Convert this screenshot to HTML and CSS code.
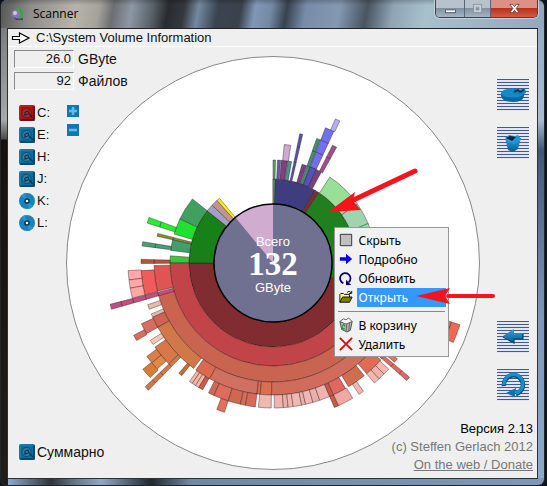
FILE: index.html
```html
<!DOCTYPE html>
<html lang="ru">
<head>
<meta charset="utf-8">
<title>Scanner</title>
<link rel="stylesheet" href="styles.css">
</head>
<body>
<svg class="defs" width="0" height="0" aria-hidden="true">
  <defs>
    <linearGradient id="blue" x1="0" y1="0" x2="0" y2="1"><stop offset="0" stop-color="#2fa0dc"/><stop offset="1" stop-color="#065a94"/></linearGradient>
    <symbol id="disk" viewBox="0 0 16 16">
      <rect width="16" height="16" rx="2" fill="currentColor"/>
      <path d="M1 15V2l1-1h13" fill="none" stroke="#fff" stroke-opacity=".15"/>
      <path d="M1 15h14V1" fill="none" stroke="#002038" stroke-opacity=".45" stroke-width="2"/>
      <circle cx="7.500" cy="8" r="4.500" fill="#fff" fill-opacity=".12" stroke="#001c30" stroke-opacity=".45"/>
      <path d="M6 7l3-1 1 3 4 4M6 7v3l3-1" fill="none" stroke="#001c30" stroke-opacity=".7" stroke-width="1.300"/>
    </symbol>
    <symbol id="disc" viewBox="0 0 16 16">
      <circle cx="8" cy="8" r="8" fill="#1583bd"/>
      <path d="M8 8L2 3a8 8 0 0 1 4-3zM8 8l6 5a8 8 0 0 1-4 3z" fill="#2c94ca"/>
      <circle cx="8" cy="8" r="2.800" fill="#06344f"/><circle cx="8" cy="8" r="1.300" fill="#fff"/>
    </symbol>
  </defs>
</svg>

<div class="window">
  <header class="titlebar">
    <svg class="app-icon" viewBox="0 0 14 14" aria-hidden="true">
      <path d="M5 1q7-1 7 6 0 3-4 4l-2-4z" fill="#30a848"/><circle cx="5" cy="7" r="4.500" fill="#8878a8"/><path d="M2 10q5 3 10 1v2H5z" fill="#473a80"/><circle cx="4" cy="6" r="2" fill="#d0c8dc"/>
    </svg>
    <h1 class="title">Scanner</h1>
    <div class="controls">
      <button class="ctl" aria-label="Minimize"><svg viewBox="0 0 12 12"><rect x=".5" y="7.500" width="11" height="3" fill="#fff" stroke="#555a66"/></svg></button>
      <button class="ctl ctl-max" aria-label="Maximize"><svg viewBox="0 0 12 12"><path d="M1.500 1.500h9v9h-9zM4.500 4.500h3v3h-3z" fill="#c8ced6" fill-rule="evenodd" stroke="#8a929e"/></svg></button>
      <button class="ctl ctl-close" aria-label="Close"><svg viewBox="0 0 12 12"><path d="M1 1.500h3l2 2.500 2-2.500h3L7.800 6l3.200 4.500H8L6 8l-2 2.500H1L4.200 6z" fill="#fff" stroke="#5c2a2a" stroke-width=".8"/></svg></button>
    </div>
  </header>

  <main class="client">
    <div class="path">
      <svg class="path-arrow" viewBox="0 0 18 12" aria-hidden="true"><path d="M.5 4.500h7v-3.500l9.500 5-9.500 5V7.500h-7z" fill="#fff" stroke="#000" stroke-width="1.200"/></svg>
      <span>C:\System Volume Information</span>
    </div>

    <div class="stage">
      <div class="chart">
        <svg id="sunburst" viewBox="0 0 414 414" role="img" aria-label="Всего 132 GByte"></svg>
        <svg class="pointer" viewBox="0 0 414 414" aria-hidden="true">
          <path d="M349 115L281 147" stroke="#f5141c" stroke-width="5" stroke-linecap="round"/>
          <path d="M262 156l27-20-2 9 8 9z" fill="#f5141c"/>
        </svg>
        <menu class="menu">
          <li><button class="item"><svg viewBox="0 0 16 16"><path d="M1.500 1.500h13v13h-13z" fill="#c0c0c0" stroke="#222"/></svg><span>Скрыть</span></button></li>
          <li><button class="item"><svg viewBox="0 0 16 16"><path d="M1 6h7V2l7 6-7 6v-4H1z" fill="#0000f0"/></svg><span>Подробно</span></button></li>
          <li><button class="item"><svg viewBox="0 0 16 16"><path d="M5 14a6 6 0 1 1 6-1" fill="none" stroke="#000080" stroke-width="2"/><path d="M8 10v6h6z" fill="#000080"/></svg><span>Обновить</span></button></li>
          <li><button class="item selected"><svg viewBox="0 0 16 16"><path d="M1 14V5l1-1h3l1 1h6v3" fill="#ffff80" stroke="#000"/><path d="M1 14l3-6h11l-3 6z" fill="#808000" stroke="#000"/><path d="M9 3q2-3 5 0M14.500 1v3h-3" fill="none" stroke="#000"/></svg><span>Открыть</span></button></li>
          <li class="rule" role="separator"></li>
          <li><button class="item"><svg viewBox="0 0 16 16"><path d="M1 4l7 2 7-2-2 10-4 2-6-3z" fill="#b8b8b8" stroke="#444"/><path d="M1 4l4-3 3 1 3-2 4 4-7 3z" fill="#f4f4f4" stroke="#555"/><path d="M9 7l-1 8M12 6l-1 9" stroke="#555"/><path d="M3.500 9l2-1.500 1.500 2M3.500 10l1 2.500 2-.5" fill="none" stroke="#10a040" stroke-width="1.500"/></svg><span>В корзину</span></button></li>
          <li><button class="item"><svg viewBox="0 0 16 16"><path d="M1 1l14 14M15 1L1 15" stroke="#e00000" stroke-width="2"/></svg><span>Удалить</span></button></li>
        </menu>
        <svg class="pointer" viewBox="0 0 414 414" aria-hidden="true">
          <path d="M382 240h45" stroke="#f5141c" stroke-width="4" stroke-linecap="round"/>
          <path d="M350 240l34-8-5 8 5 8z" fill="#f5141c"/>
        </svg>
      </div>

      <div class="panels">
        <div class="left">
          <dl class="stats">
            <div><dd>26.0</dd><dt>GByte</dt></div>
            <div><dd>92</dd><dt>Файлов</dt></div>
          </dl>
          <div class="picker">
            <div class="drives">
              <button class="drive"><svg class="red"><use href="#disk"/></svg>C:</button>
              <button class="drive"><svg><use href="#disk"/></svg>E:</button>
              <button class="drive"><svg><use href="#disk"/></svg>H:</button>
              <button class="drive"><svg><use href="#disk"/></svg>J:</button>
              <button class="drive"><svg><use href="#disc"/></svg>K:</button>
              <button class="drive"><svg><use href="#disc"/></svg>L:</button>
            </div>
            <div class="depth">
              <button aria-label="More rings"><svg viewBox="0 0 12 12"><path d="M6 2v8M2 6h8" stroke="#64bcec" stroke-width="2.500"/></svg></button>
              <button aria-label="Fewer rings"><svg viewBox="0 0 12 12"><path d="M2 6h8" stroke="#64bcec" stroke-width="2.500"/></svg></button>
            </div>
          </div>
          <button class="drive total"><svg><use href="#disk"/></svg>Суммарно</button>
        </div>

        <div class="right">
          <div class="tools">
            <button class="tool" aria-label="Disk"><svg viewBox="0 0 32 32"><path d="M4 14v3q1 6 12 6 10 0 11-6v-5z" fill="#0868a4"/><ellipse cx="15.500" cy="14" rx="11.500" ry="4.500" fill="#158acb"/><path d="M16 14l2-4 4 1 6-2 1 5-5 2z" fill="#1280bd"/><path d="M17 13l4-2 2 2 4-2" fill="none" stroke="#06334f" stroke-width="1.500"/></svg></button>
            <button class="tool" aria-label="Recycle bin"><svg viewBox="0 0 32 32"><path d="M8 11l6 4 10-4-3 11-5 3-5-2z" fill="url(#blue)"/><path d="M8 11l4-3 6 1 3-1 3 4-7 5z" fill="#2297d6"/><path d="M9 11l4-2 6 1-4 4z" fill="#06283e"/></svg></button>
          </div>
          <div class="tools">
            <button class="tool" aria-label="Back"><svg viewBox="0 0 32 32"><path d="M6 15l11-7v4h9v6H17v4z" fill="url(#blue)"/><path d="M6 16l11 6v-4h9v-5" fill="none" stroke="#064066" stroke-width="1.200"/></svg></button>
            <button class="tool" aria-label="Rescan"><svg viewBox="0 0 32 32"><path d="M7 17a9.500 9.500 0 1 1 12 8" fill="none" stroke="#064870" stroke-width="4.500"/><path d="M7 16a9.500 9.500 0 1 1 12 8" fill="none" stroke="#198ccb" stroke-width="3.500"/><path d="M9 24l10-5-1 9z" fill="#0c73ae"/></svg></button>
          </div>
          <footer class="about">
            <span class="version">Версия 2.13</span>
            <span>(c) Steffen Gerlach 2012</span>
            <a href="#donate">On the web / Donate</a>
          </footer>
        </div>
      </div>
    </div>
  </main>
</div>
<script src="sunburst.js"></script>
</body>
</html>
```
FILE: styles.css
```css
* { box-sizing: border-box; }

body {
  margin: 0;
  height: 100vh;
  font: 13px/18px "Liberation Sans", Arial, sans-serif;
  color: #111;
  background: #0c1420;
}

button {
  margin: 0;
  padding: 0;
  border: 0;
  background: none;
  font: inherit;
  color: inherit;
}

svg { display: block; overflow: visible; }
.defs { position: absolute; }

.window {
  display: flex;
  flex-direction: column;
  min-height: 100vh;
  margin-right: 2px;
  padding: 0 6px 6px;
  border: 1px solid #20252c;
  border-top: 0;
  border-radius: 7px;
  background:
    linear-gradient(90deg, transparent 0 7px, #30343a 50px, #68798c 75px, #90a8c8 100px, #202830 150px, #7088a8 190px, #8098b8 100%) bottom / 100% 7px no-repeat,
    linear-gradient(#707070 0, #a8a8a8 120px, #4a4a4a 139px, #16130f 140px, #201c18 100%) left / 7px 100% no-repeat,
    linear-gradient(#8fa8c4 0, #a8bcd4 120px, #405878 150px, #7c98bc 320px, #8cabd0 100%);
}

.titlebar {
  display: flex;
  align-items: center;
  gap: 8px;
  height: 28px;
  margin: 0 -6px;
  padding: 0 6px 0 10px;
  border-radius: 7px 7px 0 0;
  background:
    linear-gradient(#0003, transparent 5px),
    linear-gradient(100deg, #555 0, #8c8c8a 30px, #b8b4ac 75px, #a4a29c 98px, #6c6e72 112px, #8c98a4 130px, #5c646c 150px, #282c30 166px, #34393e 182px, #7488a0 196px, #3a4450 215px, #3a424c 238px, #8098b4 252px, #7488a4 268px, #38424e 283px, #788ca8 302px, #8498b0 335px, #485460 362px, #90a4b4 388px, #a8c0cc 420px, #94a8bc 100%);
}

.app-icon { width: 14px; height: 14px; }

.title {
  margin: 0;
  font: 12px/16px "Open Sans", "Noto Sans", sans-serif;
  color: #000;
}

.controls {
  display: flex;
  align-self: flex-start;
  margin-left: auto;
  height: 18px;
  border: 1px solid #3c4450;
  border-top: 0;
  border-radius: 0 0 5px 5px;
  overflow: hidden;
  box-shadow: 0 0 0 1px #c4d0dc;
}

.ctl {
  display: grid;
  place-items: center;
  width: 28px;
  background: linear-gradient(#b8c2cc 45%, #8390a0 50%, #a4b4c4);
}
.ctl svg { width: 11px; height: 11px; }
.ctl-max { width: 27px; border: solid #5c6672; border-width: 0 1px; }
.ctl-close { width: 46px; background: linear-gradient(#dc9184 45%, #b83220 50%, #d45c40); }

.client {
  flex: 1;
  display: flex;
  flex-direction: column;
  border: 1px solid #303030;
  border-top-color: #222;
  background: #efefef;
}

.path {
  display: flex;
  align-items: center;
  gap: 6px;
  height: 18px;
  padding-left: 4px;
  border-bottom: 1px solid #fff;
}
.path-arrow { width: 18px; height: 12px; }

.stage {
  flex: 1;
  display: grid;
}
.stage > * { grid-area: 1 / 1; }

.chart {
  position: relative;
  align-self: center;
  justify-self: center;
  width: 414px;
}

.pointer { position: absolute; inset: 0; pointer-events: none; }

.disc-label { fill: #fff; text-anchor: middle; }
.disc-total { font: bold 33px "Liberation Serif", "Times New Roman", serif; }

.menu {
  position: absolute;
  left: 268px;
  top: 171px;
  width: 115px;
  margin: 0;
  padding: 3px 2px 2px;
  list-style: none;
  border: 1px solid #979797;
  background: #f1f1f1;
  font: 12px/19px "Noto Sans", "Open Sans", sans-serif;
  color: #000;
}

.item {
  display: flex;
  align-items: center;
  gap: 2px;
  width: 100%;
  height: 19px;
  text-align: left;
}
.item svg { width: 14px; height: 14px; margin: 0 2px; }
.item span { flex: 1; padding-left: 2px; }
.selected span { background: #3399ff; color: #fff; }
.rule { height: 1px; margin: 4px 1px; background: #888; }

.panels {
  z-index: 1;
  display: flex;
  justify-content: space-between;
  pointer-events: none;
}
.panels button, .panels a { pointer-events: auto; }

.left {
  display: flex;
  flex-direction: column;
  padding: 3px 0 17px 6px;
}

.stats { margin: 0; display: grid; gap: 4px; }
.stats div { display: flex; align-items: center; gap: 4px; }
.stats dt { font-size: 14px; }
.stats dd {
  width: 60px;
  height: 18px;
  line-height: 16px;
  margin: 0;
  padding-right: 2px;
  border: 1px solid #888;
  border-right-color: #fff;
  border-bottom-color: #fff;
  text-align: right;
}

.picker { display: flex; gap: 17px; padding: 14px 0 0 5px; }
.drives { display: grid; gap: 4px; align-content: start; width: 31px; }
.drive { display: flex; align-items: center; gap: 2px; height: 18px; white-space: nowrap; }
.drive svg { width: 16px; height: 16px; flex: none; color: #0b6d9f; }
.drive svg.red { color: #b00c0c; }
.total { margin: auto 0 0 5px; font-size: 14px; }

.depth { display: grid; gap: 7px; align-content: start; padding-top: 1px; }
.depth button { width: 12px; height: 12px; background: #0f78b4; }

.right {
  display: flex;
  flex-direction: column;
  align-items: flex-end;
  padding: 32px 4px 4px 0;
}
.tools { display: grid; gap: 16px; padding-right: 4px; }
.tools + .tools { margin-top: auto; }
.tool {
  width: 32px;
  height: 32px;
  background: repeating-linear-gradient(#435a91 0 1px, #e4e6ee 1px 3px);
}

.about {
  display: flex;
  flex-direction: column;
  margin-top: 19px;
  text-align: right;
  color: #777;
}
.version { color: #000; }
.about a { color: #777; }
```
FILE: sunburst.js
```js
// Ring boundaries: ring n lies between RADII[n - 1] and RADII[n].
const RADII = [59, 84, 103, 119, 132, 145, 157, 168, 178, 188, 197];
const CENTER = 207;

// [first ring, last ring, start angle, end angle, colour], clockwise from the top.
const SECTORS = [
  [1, 1, 0, 30, "#403c80"], [1, 1, 30, 33, "#802c38"], [1, 1, 33, 104, "#208020"],
  [1, 1, 104, 270, "#802c30"], [1, 1, 270, 308.4, "#188018"],
  [1, 1, 308.4, 313.5, "#a0a0c4"], [1, 1, 313.5, 318.2, "#c09494"], [1, 1, 318.2, 320.4, "#f4ec20"],
  [1, 2, 0, 1.4, "#50a860"], [2, 2, 2.5, 4.2, "#6060b0"], [2, 2, 4.6, 8, "#804080"],
  [3, 3, 5.4, 8.6, "#d0a8d0"], [2, 2, 8.2, 10.4, "#4a9090"], [2, 4, 11.7, 13, "#5454b8"],
  [2, 2, 16.4, 19, "#784080"], [2, 4, 19.3, 21, "#409078"], [2, 5, 21.2, 24.8, "#7070f0"],
  [2, 2, 21.2, 24.8, "#5454b8"], [6, 6, 23.4, 25.2, "#b0b0f8"], [2, 2, 25, 28, "#784080"], [3, 4, 26.8, 28.8, "#a05090"],
  [2, 2, 33.5, 55, "#98e098"], [2, 2, 55, 67.5, "#a0d4b0"], [2, 2, 67.5, 75, "#98e0a8"],
  [2, 2, 295.3, 308.5, "#40a060"], [2, 2, 286.3, 295.3, "#20e030"], [3, 4, 287.6, 290.2, "#20f030"],
  [2, 3, 283, 284.4, "#809030"], [2, 2, 277, 283, "#40a068"], [3, 4, 277.4, 279.3, "#40a078"],
  [2, 2, 270, 274, "#38c840"], [3, 4, 269.8, 271.6, "#b05838"],
  [2, 2, 104, 270, "#c04448"],
  [3, 3, 104, 254.5, "#c86450"], [3, 3, 256.3, 268.8, "#e05454"],
  [4, 4, 256, 266.7, "#f05c5c"], [5, 5, 263.3, 267, "#ffa8a8"], [5, 5, 260, 263.3, "#ffa8a8"], [5, 5, 256, 260, "#ffa8a8"],
  [3, 7, 254, 255.8, "#c05080"],
  [4, 4, 249.5, 251.6, "#e8b8a8"], [4, 4, 245.7, 247.3, "#e8b8b0"], [4, 4, 240.8, 245.7, "#d06454"],
  [5, 5, 240.8, 245.2, "#d86c60"], [6, 6, 240.4, 242.6, "#d86c60"],
  [4, 4, 217, 240.8, "#d07848"], [5, 5, 235.8, 237.8, "#f0c8b8"],
  [5, 5, 226, 234.5, "#d87848"], [6, 6, 230.5, 233.5, "#d88048"], [6, 6, 227.5, 230.5, "#e08848"],
  [7, 7, 227, 230.8, "#d87c38"], [5, 8, 224.4, 225.9, "#d07848"], [5, 5, 219, 220.5, "#c07038"],
  [4, 4, 208.7, 215.8, "#dc6850"], [4, 4, 187, 208.7, "#d07060"], [4, 4, 185.6, 187, "#d86c50"],
  [4, 4, 180.6, 185.6, "#d87050"], [4, 4, 104, 180.6, "#d06c5c"],
  [5, 5, 213.8, 215.2, "#f0b8a8"], [5, 5, 212.3, 213.8, "#f0b8a8"], [5, 5, 210.8, 212.3, "#f0b8a8"],
  [5, 5, 209, 210.8, "#d05848"], [5, 5, 204, 206.4, "#d06858"], [5, 5, 198, 204, "#dc6c5c"],
  [6, 6, 198, 201, "#e07060"], [5, 5, 193, 198, "#d06850"], [5, 5, 191, 193, "#d07058"], [5, 5, 187, 191, "#d86858"],
  [5, 5, 180.7, 185.8, "#f0b8b0"],
  [5, 5, 175.9, 179.5, "#f0b4b0"], [5, 5, 174, 175.9, "#e8b0a8"], [5, 5, 172, 174, "#f0b4b0"],
  [5, 5, 168.6, 172, "#f0b8b0"], [5, 5, 167, 168.6, "#e8b0a8"], [5, 5, 164, 167, "#f0b8b0"],
  [5, 5, 161.2, 164, "#e8b0a8"], [5, 5, 157, 161.2, "#f0b4b0"],
  [5, 6, 155.3, 157, "#c85848"], [5, 5, 150, 155.3, "#e06860"], [6, 6, 149.5, 155.3, "#f0a8a0"],
  [5, 5, 141, 148.6, "#d06c50"], [6, 6, 144.8, 146.8, "#f0b8b0"],
  [5, 5, 132, 139.8, "#e06c58"], [6, 6, 137.5, 139.8, "#f4b8b0"], [6, 6, 135, 137.5, "#f0b0a8"], [6, 6, 132.5, 135, "#f4b8b0"],
  [5, 8, 129.9, 131.3, "#e06860"], [5, 6, 127.6, 129.2, "#e07858"],
  [8, 10, 108.3, 113.8, "#f06854"]
];

const svg = document.getElementById("sunburst");

function add(name, attributes, text) {
  const node = document.createElementNS("http://www.w3.org/2000/svg", name);
  for (const [key, value] of Object.entries(attributes)) node.setAttribute(key, value);
  if (text) node.textContent = text;
  svg.append(node);
}

function point(radius, angle) {
  const a = angle * Math.PI / 180;
  return `${CENTER + radius * Math.sin(a)} ${CENTER - radius * Math.cos(a)}`;
}

function sector(inner, outer, start, end) {
  const large = end - start > 180 ? 1 : 0;
  return `M${point(inner, start)}L${point(outer, start)}A${outer} ${outer} 0 ${large} 1 ${point(outer, end)}` +
    `L${point(inner, end)}A${inner} ${inner} 0 ${large} 0 ${point(inner, start)}Z`;
}

add("circle", { cx: CENTER, cy: CENTER, r: 206.5, fill: "#fff", stroke: "#888" });
for (const [first, last, start, end, fill] of SECTORS) {
  for (let ring = first; ring <= last; ring++) {
    add("path", { d: sector(RADII[ring - 1], RADII[ring], start, end), fill, stroke: "#2a1010", "stroke-opacity": 0.55, "stroke-width": 0.7 });
  }
}
add("circle", { cx: CENTER, cy: CENTER, r: 59, fill: "#707090" });
add("path", { d: sector(0, 59, 320.4, 360), fill: "#d0acd0" });
add("circle", { cx: CENTER, cy: CENTER, r: 59, fill: "none", stroke: "#000", "stroke-width": 1.5 });
add("text", { x: CENTER, y: 190, class: "disc-label" }, "Всего");
add("text", { x: CENTER, y: 219, class: "disc-label disc-total" }, "132");
add("text", { x: CENTER, y: 236, class: "disc-label" }, "GByte");
```
